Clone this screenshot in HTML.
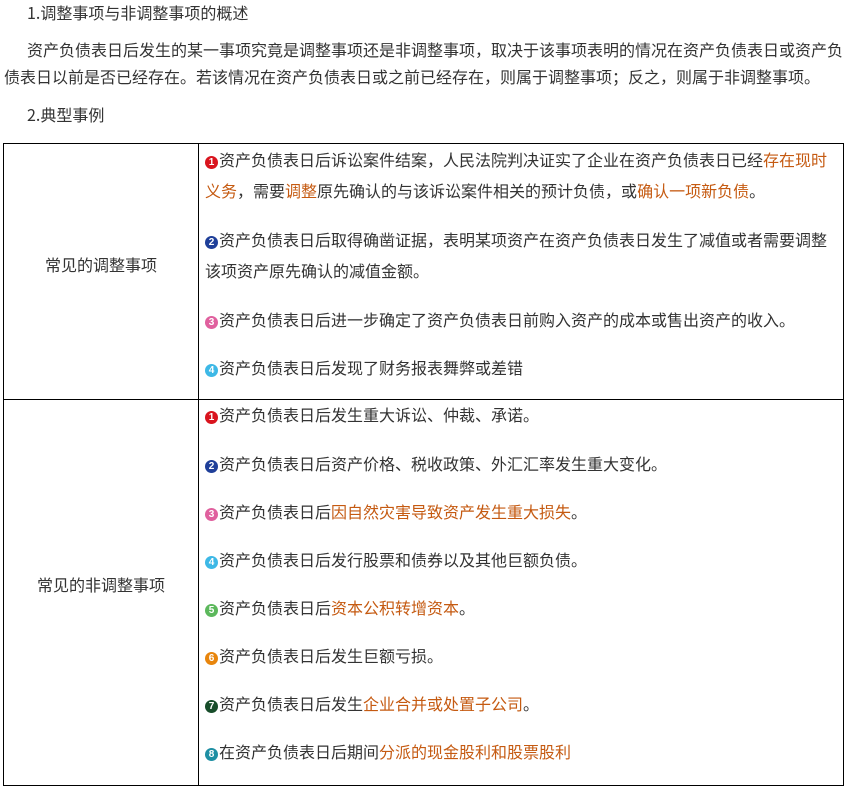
<!DOCTYPE html>
<html><head><meta charset="utf-8"><style>
body{margin:0;width:845px;height:788px;background:#fff;position:relative;overflow:hidden;font-family:"WenQuanYi Zen Hei","Noto Sans CJK SC",sans-serif;color:#333;font-size:16px}
.t{position:absolute;white-space:nowrap;line-height:20px}
.o{color:#c55a11}
.n{display:inline-block;width:13px;height:13px;border-radius:50%;color:#fff;font-size:10px;line-height:13px;text-align:center;vertical-align:1px;margin-right:1px;font-weight:bold;font-family:"Liberation Sans",sans-serif}
.b{position:absolute;background:#000}
</style></head><body>
<div class="t" style="left:27px;top:2px">1.调整事项与非调整事项的概述</div>
<div class="t" style="left:27px;top:39px">资产负债表日后发生的某一事项究竟是调整事项还是非调整事项，取决于该事项表明的情况在资产负债表日或资产负</div>
<div class="t" style="left:4px;top:66px">债表日以前是否已经存在。若该情况在资产负债表日或之前已经存在，则属于调整事项；反之，则属于非调整事项。</div>
<div class="t" style="left:27px;top:104px">2.典型事例</div>

<div class="b" style="left:3px;top:143px;width:841px;height:1px"></div>
<div class="b" style="left:3px;top:399px;width:841px;height:1px"></div>
<div class="b" style="left:3px;top:785px;width:841px;height:1px"></div>
<div class="b" style="left:3px;top:143px;width:1px;height:643px"></div>
<div class="b" style="left:198px;top:143px;width:1px;height:643px"></div>
<div class="b" style="left:843px;top:143px;width:1px;height:643px"></div>

<div class="t" style="left:45px;top:254px">常见的调整事项</div>
<div class="t" style="left:37px;top:574px">常见的非调整事项</div>

<div class="t" style="left:205px;top:149px"><span class="n" style="background:#d9141e">1</span>资产负债表日后诉讼案件结案，人民法院判决证实了企业在资产负债表日已经<span class="o">存在现时</span></div>
<div class="t" style="left:205px;top:180px"><span class="o">义务</span>，需要<span class="o">调整</span>原先确认的与该诉讼案件相关的预计负债，或<span class="o">确认一项新负债</span>。</div>
<div class="t" style="left:205px;top:229px"><span class="n" style="background:#1f3f99">2</span>资产负债表日后取得确凿证据，表明某项资产在资产负债表日发生了减值或者需要调整</div>
<div class="t" style="left:205px;top:260px">该项资产原先确认的减值金额。</div>
<div class="t" style="left:205px;top:309px"><span class="n" style="background:#e0609e">3</span>资产负债表日后进一步确定了资产负债表日前购入资产的成本或售出资产的收入。</div>
<div class="t" style="left:205px;top:357px"><span class="n" style="background:#3db8e6">4</span>资产负债表日后发现了财务报表舞弊或差错</div>

<div class="t" style="left:205px;top:404px"><span class="n" style="background:#d9141e">1</span>资产负债表日后发生重大诉讼、仲裁、承诺。</div>
<div class="t" style="left:205px;top:453px"><span class="n" style="background:#1f3f99">2</span>资产负债表日后资产价格、税收政策、外汇汇率发生重大变化。</div>
<div class="t" style="left:205px;top:501px"><span class="n" style="background:#e0609e">3</span>资产负债表日后<span class="o">因自然灾害导致资产发生重大损失</span>。</div>
<div class="t" style="left:205px;top:549px"><span class="n" style="background:#3db8e6">4</span>资产负债表日后发行股票和债券以及其他巨额负债。</div>
<div class="t" style="left:205px;top:597px"><span class="n" style="background:#5cb85c">5</span>资产负债表日后<span class="o">资本公积转增资本</span>。</div>
<div class="t" style="left:205px;top:645px"><span class="n" style="background:#e8850c">6</span>资产负债表日后发生巨额亏损。</div>
<div class="t" style="left:205px;top:693px"><span class="n" style="background:#174d2a">7</span>资产负债表日后发生<span class="o">企业合并或处置子公司</span>。</div>
<div class="t" style="left:205px;top:741px"><span class="n" style="background:#1e8fa3">8</span>在资产负债表日后期间<span class="o">分派的现金股利和股票股利</span></div>
</body></html>
